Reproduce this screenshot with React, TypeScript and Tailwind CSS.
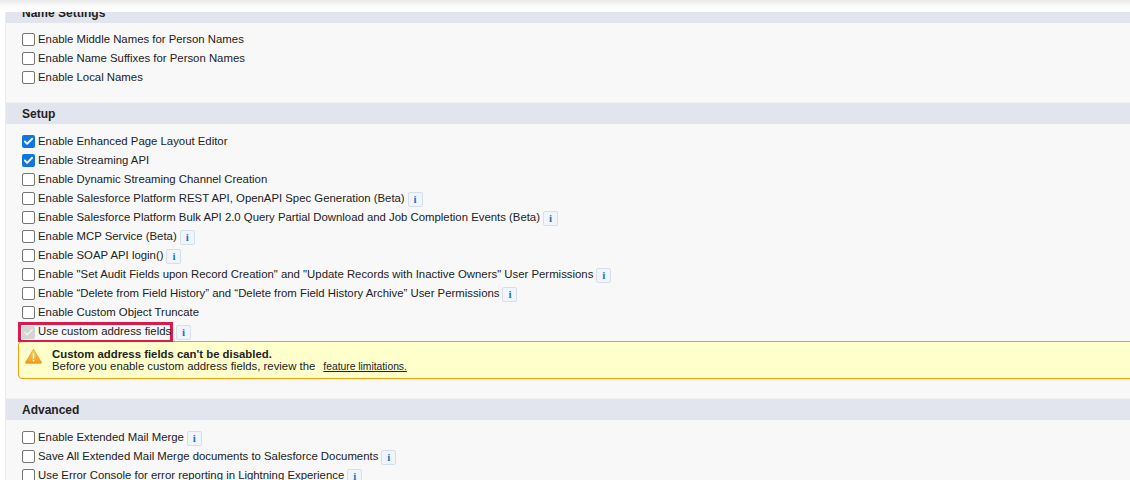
import { Check } from "lucide-react";

type Row = { label: string; checked?: boolean; info?: boolean };

const NAME_ROWS: Row[] = [
  { label: "Enable Middle Names for Person Names" },
  { label: "Enable Name Suffixes for Person Names" },
  { label: "Enable Local Names" },
];

const SETUP_ROWS: Row[] = [
  { label: "Enable Enhanced Page Layout Editor", checked: true },
  { label: "Enable Streaming API", checked: true },
  { label: "Enable Dynamic Streaming Channel Creation" },
  { label: "Enable Salesforce Platform REST API, OpenAPI Spec Generation (Beta)", info: true },
  { label: "Enable Salesforce Platform Bulk API 2.0 Query Partial Download and Job Completion Events (Beta)", info: true },
  { label: "Enable MCP Service (Beta)", info: true },
  { label: "Enable SOAP API login()", info: true },
  { label: 'Enable "Set Audit Fields upon Record Creation" and "Update Records with Inactive Owners" User Permissions', info: true },
  { label: "Enable “Delete from Field History” and “Delete from Field History Archive” User Permissions", info: true },
  { label: "Enable Custom Object Truncate" },
];

const ADVANCED_ROWS: Row[] = [
  { label: "Enable Extended Mail Merge", info: true },
  { label: "Save All Extended Mail Merge documents to Salesforce Documents", info: true },
  { label: "Use Error Console for error reporting in Lightning Experience", info: true },
];

function InfoIcon() {
  return (
    <span className="ml-[3px] mt-[2px] flex h-[15px] w-[15px] shrink-0 items-center justify-center rounded-[2px] border border-[#d5dfea] bg-[#f0f5fb] font-['Liberation_Serif',serif] text-[11px] font-bold leading-none text-[#1f6fc4]">
      i
    </span>
  );
}

function Box({ checked }: { checked?: boolean }) {
  if (checked) {
    return (
      <span className="flex h-[13px] w-[13px] shrink-0 items-center justify-center rounded-[2px] bg-[#0f75e0]">
        <Check className="h-[11px] w-[11px] text-white" strokeWidth={4} />
      </span>
    );
  }
  return <span className="h-[13px] w-[13px] shrink-0 rounded-[2px] border border-[#767676] bg-white" />;
}

function SettingRow({ label, checked, info }: Row) {
  return (
    <div className="flex h-[19px] items-center">
      <Box checked={checked} />
      <span className="ml-[3px] whitespace-nowrap">{label}</span>
      {info && <InfoIcon />}
    </div>
  );
}

function SectionHeader({ title }: { title: string }) {
  return (
    <div className="flex h-[22px] items-center border-t border-[#f0f0f3] bg-[#e3e5ee] pl-[16px] text-[12px] font-bold text-[#222]">
      {title}
    </div>
  );
}

export default function App() {
  return (
    <div className="flex h-[480px] w-[1130px] flex-col overflow-hidden bg-white font-['Liberation_Sans',sans-serif] text-[11.36px] text-[#222]">
      <div className="h-[12px] shrink-0 bg-gradient-to-b from-[#e8e8e8] via-[#fbfbfb] to-white" />
      <div className="min-h-0 flex-1 overflow-hidden border-l border-[#ececec] bg-[#f8f8f8] ml-[5px]">
        <div className="-mt-[11px]">
          <SectionHeader title="Name Settings" />
        </div>
        <div className="flex flex-col pl-[16px] pt-[7px]">
          {NAME_ROWS.map((r) => (
            <SettingRow key={r.label} {...r} />
          ))}
        </div>
        <div className="h-[15px]" />

        <SectionHeader title="Setup" />
        <div className="flex flex-col pl-[16px] pt-[8px]">
          {SETUP_ROWS.map((r) => (
            <SettingRow key={r.label} {...r} />
          ))}
          <div className="flex h-[19px] items-center">
            <div className="-ml-[4px] flex h-[20px] w-[155px] items-center border-[3px] border-b-2 border-[#dc1a4a] pl-[1px]">
              <span className="flex h-[13px] w-[13px] shrink-0 items-center justify-center rounded-[2px] bg-[#d4d4d4]">
                <Check className="h-[11px] w-[11px] text-[#f4f4f4]" strokeWidth={3} />
              </span>
              <span className="ml-[3px] whitespace-nowrap">Use custom address fields</span>
            </div>
            <InfoIcon />
          </div>
        </div>
        <div className="-mr-[4px] ml-[12px] flex h-[38px] rounded-[4px] border border-[#f59e0b] bg-[#ffffcc]">
          <svg viewBox="0 0 18 16" className="ml-[6px] mt-[6px] h-[16px] w-[17px] shrink-0">
            <defs>
              <linearGradient id="warn" x1="0" y1="0" x2="0" y2="1">
                <stop offset="0" stopColor="#fbd15b" />
                <stop offset="1" stopColor="#f09a1a" />
              </linearGradient>
            </defs>
            <path d="M9 .8 17.4 14.6a.8.8 0 0 1-.7 1.2H1.3a.8.8 0 0 1-.7-1.2Z" fill="url(#warn)" stroke="#d98a12" strokeWidth=".6" />
            <rect x="8.2" y="5" width="1.6" height="6" fill="#fff" />
            <rect x="8.2" y="12" width="1.6" height="1.7" fill="#fff" />
          </svg>
          <div className="ml-[10px] self-center leading-[12px]">
            <div className="font-bold">Custom address fields can't be disabled.</div>
            <div>
              Before you enable custom address fields, review the
              <span className="ml-[8px] text-[10.3px] underline">feature limitations.</span>
            </div>
          </div>
        </div>
        <div className="h-[19px]" />

        <SectionHeader title="Advanced" />
        <div className="flex flex-col pl-[16px] pt-[8px]">
          {ADVANCED_ROWS.map((r) => (
            <SettingRow key={r.label} {...r} />
          ))}
        </div>
      </div>
    </div>
  );
}
